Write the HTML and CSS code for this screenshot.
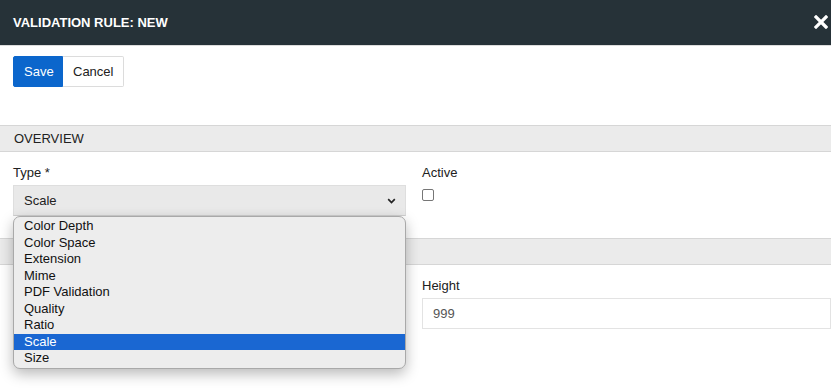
FILE: index.html
```html
<!DOCTYPE html>
<html>
<head>
<meta charset="utf-8">
<link rel="stylesheet" href="styles.css">
</head>
<body>
<header class="topbar">
  <h1 class="title">VALIDATION RULE: NEW</h1>
  <button class="close" aria-label="Close">
    <svg width="14" height="14" viewBox="0 0 14 14"><path d="M2 2 L12 12 M12 2 L2 12" stroke="#fff" stroke-width="3.2" stroke-linecap="square"/></svg>
  </button>
</header>
<div class="actions">
  <button class="btn btn-primary">Save</button>
  <button class="btn btn-default">Cancel</button>
</div>
<section class="section">
  <div class="section-head">OVERVIEW</div>
  <div class="form-row">
    <div class="field field-type">
      <label class="label">Type *</label>
      <div class="select">
        <span>Scale</span>
        <svg class="chev" width="9" height="6" viewBox="0 0 9 6"><path d="M1.2 1.2 L4.5 4.5 L7.8 1.2" fill="none" stroke="#222" stroke-width="1.7"/></svg>
      </div>
      <ul class="dropdown">
        <li>Color Depth</li>
        <li>Color Space</li>
        <li>Extension</li>
        <li>Mime</li>
        <li>PDF Validation</li>
        <li>Quality</li>
        <li>Ratio</li>
        <li class="selected">Scale</li>
        <li>Size</li>
      </ul>
    </div>
    <div class="field">
      <label class="label">Active</label>
      <span class="checkbox"></span>
    </div>
  </div>
</section>
<section class="section">
  <div class="section-head"></div>
  <div class="form-row">
    <div class="field">
      <span class="label"></span>
      <div class="input"></div>
    </div>
    <div class="field">
      <label class="label">Height</label>
      <div class="input">999</div>
    </div>
  </div>
</section>
</body>
</html>
```
FILE: styles.css
```css
* { box-sizing: border-box; }
html, body { min-height: 392px; }
body {
  margin: 0;
  font-family: "Liberation Sans", Arial, sans-serif;
  font-size: 13px;
  color: #212121;
  background: #fff;
}
.topbar {
  height: 46px;
  background: #263238;
  border-bottom: 1px solid #dcdcdc;
  display: flex;
  align-items: center;
  justify-content: space-between;
  padding: 0 2px 1px 13px;
}
.title {
  margin: 0;
  font-size: 13px;
  font-weight: bold;
  color: #fff;
}
.close {
  background: none;
  border: 0;
  padding: 0;
  width: 16px;
  height: 16px;
  display: flex;
  align-items: center;
  justify-content: center;
}
.actions {
  display: flex;
  padding: 10px 13px 0;
  height: 79px;
}
.btn {
  height: 31px;
  font-family: inherit;
  font-size: 13px;
  padding: 0 10px;
  border: 1px solid #dcdcdc;
  margin: 0;
}
.btn-primary {
  background: #0b66cc;
  border-color: #0b66cc;
  color: #fff;
  border-radius: 2px 0 0 2px;
  width: 50px;
}
.btn-default {
  background: #fff;
  color: #212121;
  border-left: 0;
  border-radius: 0 2px 2px 0;
  width: 61px;
}
.section-head {
  height: 27px;
  background: #ebebeb;
  border-top: 1px solid #d6d6d6;
  border-bottom: 1px solid #d6d6d6;
  padding-left: 14px;
  line-height: 25px;
  text-transform: uppercase;
}
.form-row {
  display: grid;
  grid-template-columns: 393px 1fr;
  column-gap: 16px;
  padding: 13px 0 22px 13px;
}
.field { position: relative; display: flex; flex-direction: column; }
.label { line-height: 16px; height: 20px; }
.select {
  height: 31px;
  background: #e9e9e9;
  border: 1px solid #dedede;
  border-bottom-color: #cfcfcf;
  display: flex;
  align-items: center;
  justify-content: space-between;
  padding: 0 9px 0 10px;
}
.chev { margin-top: 1px; }
.checkbox {
  width: 12px;
  height: 12px;
  margin: 4px 0 0 0;
  border: 1px solid #767676;
  border-radius: 2px;
  background: #fff;
}
.input {
  height: 31px;
  border: 1px solid #e3e3e3;
  padding: 0 10px;
  line-height: 29px;
  color: #555;
}
.dropdown {
  position: absolute;
  top: 51px;
  left: 0;
  width: 393px;
  margin: 0;
  padding: 1px 0;
  list-style: none;
  background: #ededed;
  border: 1px solid #a9a9a9;
  border-radius: 7px;
  box-shadow: 0 5px 14px rgba(0,0,0,0.28);
  z-index: 10;
  overflow: hidden;
}
.dropdown li {
  height: 16.5px;
  line-height: 16px;
  padding-left: 10px;
  color: #111;
}
.dropdown li.selected {
  background: #1a67d2;
  color: #fff;
}
```
